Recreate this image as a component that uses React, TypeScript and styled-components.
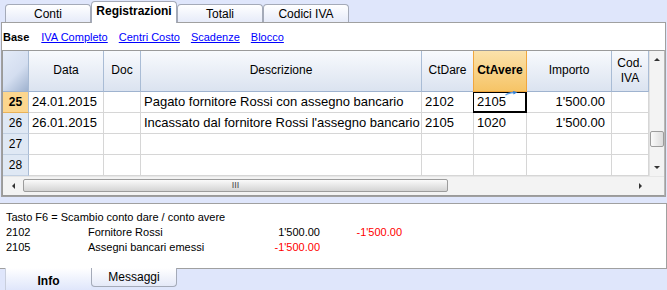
import React from 'react';
import styled, { createGlobalStyle, css } from 'styled-components';

const GlobalStyle = createGlobalStyle`
  html, body {
    margin: 0;
    padding: 0;
    background: #dfe6fb;
  }
  body {
    font-family: "Liberation Sans", Arial, sans-serif;
    width: 667px;
    height: 290px;
    overflow: hidden;
    color: #000;
  }
`;

type Column = { title: string; width: number; right?: boolean; active?: boolean };

const columns: Column[] = [
  { title: 'Data', width: 75 },
  { title: 'Doc', width: 37 },
  { title: 'Descrizione', width: 281 },
  { title: 'CtDare', width: 52 },
  { title: 'CtAvere', width: 53, active: true },
  { title: 'Importo', width: 85, right: true },
  { title: 'Cod.\nIVA', width: 37 },
];

const rows = [
  { n: 25, cells: ['24.01.2015', '', 'Pagato fornitore Rossi con assegno bancario', '2102', '2105', "1'500.00", ''] },
  { n: 26, cells: ['26.01.2015', '', "Incassato dal fornitore Rossi l'assegno bancario", '2105', '1020', "1'500.00", ''] },
  { n: 27, cells: ['', '', '', '', '', '', ''] },
  { n: 28, cells: ['', '', '', '', '', '', ''] },
];

const infoLines = [
  { code: '2102', name: 'Fornitore Rossi', a: "1'500.00", b: "-1'500.00" },
  { code: '2105', name: 'Assegni bancari emessi', a: "-1'500.00", b: '' },
];

export default function App() {
  const template = `26px ${columns.map((c) => c.width + 'px').join(' ')}`;
  return (
    <Screen>
      <GlobalStyle />
      <TabBar>
        <Tab>Conti</Tab>
        <Tab $active>Registrazioni</Tab>
        <Tab>Totali</Tab>
        <Tab>Codici IVA</Tab>
      </TabBar>
      <Panel>
        <LinkRow>
          <BaseLabel>Base</BaseLabel>
          <ViewLink>IVA Completo</ViewLink>
          <ViewLink>Centri Costo</ViewLink>
          <ViewLink>Scadenze</ViewLink>
          <ViewLink>Blocco</ViewLink>
        </LinkRow>
        <GridFrame>
          <GridArea>
            <Grid style={{ gridTemplateColumns: template }}>
              <Corner />
              {columns.map((c) => (
                <HeadCell key={c.title} $active={c.active}>
                  {c.title}
                </HeadCell>
              ))}
              {rows.map((r) => (
                <React.Fragment key={r.n}>
                  <RowHead $active={r.n === 25}>{r.n}</RowHead>
                  {r.cells.map((v, i) => (
                    <Cell key={i} $right={columns[i].right} $editing={r.n === 25 && i === 4}>
                      {v}
                      {r.n === 25 && i === 4 && (
                        <EditMark width="13" height="5" viewBox="0 0 13 5">
                          <path d="M0.5 4 Q5 1.5 9 1.5" stroke="#5b9be0" strokeWidth="1.4" fill="none" />
                          <path d="M8 0 L12.5 1.2 L8.5 3.5 Z" fill="#2f7fd8" />
                        </EditMark>
                      )}
                    </Cell>
                  ))}
                </React.Fragment>
              ))}
            </Grid>
            <VScroll>
              <Arrow $dir="up" />
              <VTrack>
                <VThumb />
              </VTrack>
              <Arrow $dir="down" />
            </VScroll>
          </GridArea>
          <HScrollRow>
            <HScroll>
              <Arrow $dir="left" />
              <HTrack>
                <HThumb>
                  <Grip>III</Grip>
                </HThumb>
              </HTrack>
              <Arrow $dir="right" />
            </HScroll>
            <ScrollCorner />
          </HScrollRow>
        </GridFrame>
      </Panel>
      <InfoPanel>
        <InfoTitle>Tasto F6 = Scambio conto dare / conto avere</InfoTitle>
        {infoLines.map((l) => (
          <InfoLine key={l.code}>
            <span>{l.code}</span>
            <span>{l.name}</span>
            <Amount $neg={l.a.startsWith('-')}>{l.a}</Amount>
            <Amount $neg={l.b.startsWith('-')}>{l.b}</Amount>
          </InfoLine>
        ))}
      </InfoPanel>
      <BottomTabs>
        <BottomTab $active>Info</BottomTab>
        <BottomTab>Messaggi</BottomTab>
      </BottomTabs>
    </Screen>
  );
}

const Screen = styled.div`
  display: flex;
  flex-direction: column;
  width: 667px;
  height: 290px;
`;

const TabBar = styled.div`
  display: flex;
  align-items: flex-end;
  height: 22px;
  padding-left: 5px;
  position: relative;
  z-index: 2;
`;

const Tab = styled.div<{ $active?: boolean }>`
  box-sizing: border-box;
  width: 86px;
  height: 18px;
  border: 1px solid #a4aab8;
  border-bottom: none;
  border-radius: 4px 4px 0 0;
  background: linear-gradient(#ffffff, #e6ebf9);
  font-size: 12px;
  display: flex;
  align-items: center;
  justify-content: center;
  padding-top: 1px;
  ${(p) =>
    p.$active &&
    css`
      height: 22px;
      margin-bottom: -1px;
      background: #fff;
      font-weight: bold;
      padding-bottom: 3px;
    `}
`;

const Panel = styled.div`
  box-sizing: border-box;
  margin-left: 1px;
  width: 665px;
  height: 175px;
  border: 1px solid #a0a0a0;
  background: #fff;
  display: flex;
  flex-direction: column;
`;

const LinkRow = styled.div`
  height: 28px;
  display: flex;
  align-items: center;
  gap: 11px;
  padding-left: 1px;
  padding-top: 1px;
  font-size: 11px;
`;

const BaseLabel = styled.span`
  font-weight: bold;
  margin-right: 1px;
`;

const ViewLink = styled.span`
  color: #0000ff;
  text-decoration: underline;
`;

const GridFrame = styled.div`
  box-sizing: border-box;
  border: 1px solid #9a9a9a;
  border-right-color: #b8b8b8;
  display: flex;
  flex-direction: column;
  height: 146px;
`;

const GridArea = styled.div`
  display: flex;
  height: 125px;
`;

const Grid = styled.div`
  display: grid;
  grid-template-rows: 41px repeat(4, 21px);
  width: 646px;
`;

const cellBase = css`
  box-sizing: border-box;
  border-right: 1px solid #d6d6d6;
  border-bottom: 1px solid #d6d6d6;
  display: flex;
  align-items: center;
  white-space: nowrap;
  overflow: hidden;
`;

const Corner = styled.div`
  ${cellBase};
  border-right: 1px solid #a7bad3;
  border-bottom: 1px solid #9fb3cf;
  background: linear-gradient(135deg, #e4ebf8 0%, #d4def0 55%, #9fb2cf 100%);
`;

const HeadCell = styled.div<{ $active?: boolean }>`
  ${cellBase};
  justify-content: center;
  text-align: center;
  white-space: pre-line;
  line-height: 15px;
  font-size: 12px;
  border-right: 1px solid #a9bcd5;
  border-bottom: 1px solid #9fb3cf;
  background: linear-gradient(#f8fafd, #dbe3f0);
  ${(p) =>
    p.$active &&
    css`
      font-weight: bold;
      border-right-color: #f0a63e;
      border-bottom-color: #f0a63e;
      border-left: 1px solid #f0a63e;
      margin-left: -1px;
      background: linear-gradient(#fbe2ab, #f6c466);
    `}
`;

const RowHead = styled.div<{ $active?: boolean }>`
  ${cellBase};
  justify-content: center;
  font-size: 12px;
  border-right: 1px solid #a9bcd5;
  border-bottom: 1px solid #c2d0e2;
  background: #dfe8f4;
  ${(p) =>
    p.$active &&
    css`
      background: #fcd68e;
      font-weight: bold;
      border-bottom-color: #e9b258;
    `}
`;

const Cell = styled.div<{ $right?: boolean; $editing?: boolean }>`
  ${cellBase};
  position: relative;
  font-size: 13px;
  padding: 0 ${(p) => (p.$right ? '6px' : '0')} 0 3px;
  justify-content: ${(p) => (p.$right ? 'flex-end' : 'flex-start')};
  ${(p) =>
    p.$editing &&
    css`
      box-shadow: inset 0 0 0 1px #000;
      border-right-color: #000;
      border-bottom-color: #000;
      margin-left: -1px;
      padding-left: 4px;
      overflow: visible;
    `}
`;

const EditMark = styled.svg`
  position: absolute;
  top: -1px;
  right: 8px;
`;

const VScroll = styled.div`
  width: 16px;
  background: #f3f3f3;
  border-left: 1px solid #e2e2e2;
  display: flex;
  flex-direction: column;
`;

const VTrack = styled.div`
  flex: 1;
  display: flex;
  flex-direction: column;
  justify-content: flex-end;
  padding-bottom: 12px;
`;

const VThumb = styled.div`
  box-sizing: border-box;
  height: 16px;
  border: 1px solid #9c9c9c;
  border-radius: 2px;
  background: linear-gradient(90deg, #fafafa, #dcdcdc);
`;

const Arrow = styled.div<{ $dir: 'up' | 'down' | 'left' | 'right' }>`
  flex: none;
  display: flex;
  align-items: center;
  justify-content: center;
  ${(p) =>
    p.$dir === 'up' || p.$dir === 'down'
      ? css`
          height: 17px;
        `
      : css`
          width: 17px;
        `}
  &::before {
    content: '';
    width: 0;
    height: 0;
    ${(p) =>
      p.$dir === 'up'
        ? css`
            border-left: 3px solid transparent;
            border-right: 3px solid transparent;
            border-bottom: 3px solid #333;
          `
        : p.$dir === 'down'
        ? css`
            border-left: 3px solid transparent;
            border-right: 3px solid transparent;
            border-top: 3px solid #333;
          `
        : p.$dir === 'left'
        ? css`
            border-top: 3px solid transparent;
            border-bottom: 3px solid transparent;
            border-right: 3px solid #333;
          `
        : css`
            border-top: 3px solid transparent;
            border-bottom: 3px solid transparent;
            border-left: 3px solid #333;
          `}
  }
`;

const HScrollRow = styled.div`
  display: flex;
  height: 19px;
  border-top: 1px solid #e6e6e6;
`;

const HScroll = styled.div`
  width: 646px;
  display: flex;
  background: #f3f3f3;
  padding-left: 2px;
  box-sizing: border-box;
`;

const HTrack = styled.div`
  flex: 1;
  display: flex;
  align-items: center;
  padding-left: 1px;
`;

const HThumb = styled.div`
  box-sizing: border-box;
  width: 425px;
  height: 13px;
  border: 1px solid #9c9c9c;
  border-radius: 2px;
  background: linear-gradient(#fafafa, #d4d4d4);
  display: flex;
  align-items: center;
  justify-content: center;
`;

const Grip = styled.span`
  font-size: 9px;
  line-height: 9px;
  color: #444;
`;

const ScrollCorner = styled.div`
  flex: 1;
  background: #f3f3f3;
`;

const InfoPanel = styled.div`
  box-sizing: border-box;
  margin: 6px 0 0 0;
  width: 667px;
  height: 67px;
  border: 1px solid #a0a0a0;
  border-left: none;
  background: #fff;
  padding: 6px 0 0 6px;
  font-size: 11px;
  line-height: 15px;
`;

const InfoTitle = styled.div``;

const InfoLine = styled.div`
  display: grid;
  grid-template-columns: 82px 150px 82px 82px;
`;

const Amount = styled.span<{ $neg?: boolean }>`
  text-align: right;
  color: ${(p) => (p.$neg ? '#ff0000' : '#000')};
`;

const BottomTabs = styled.div`
  display: flex;
  padding-left: 5px;
  margin-top: -1px;
`;

const BottomTab = styled.div<{ $active?: boolean }>`
  box-sizing: border-box;
  width: 86px;
  height: 19px;
  border: 1px solid #a4aab8;
  border-top: none;
  border-radius: 0 0 4px 4px;
  background: linear-gradient(#ffffff, #e4e9f8);
  font-size: 12px;
  display: flex;
  align-items: center;
  justify-content: center;
  ${(p) =>
    p.$active &&
    css`
      height: 22px;
      border: none;
      border-left: 1px solid #c8cedc;
      border-radius: 0;
      background: linear-gradient(#ffffff, #dfe6fb);
      font-weight: bold;
      padding-top: 6px;
      align-items: flex-start;
    `}
`;
